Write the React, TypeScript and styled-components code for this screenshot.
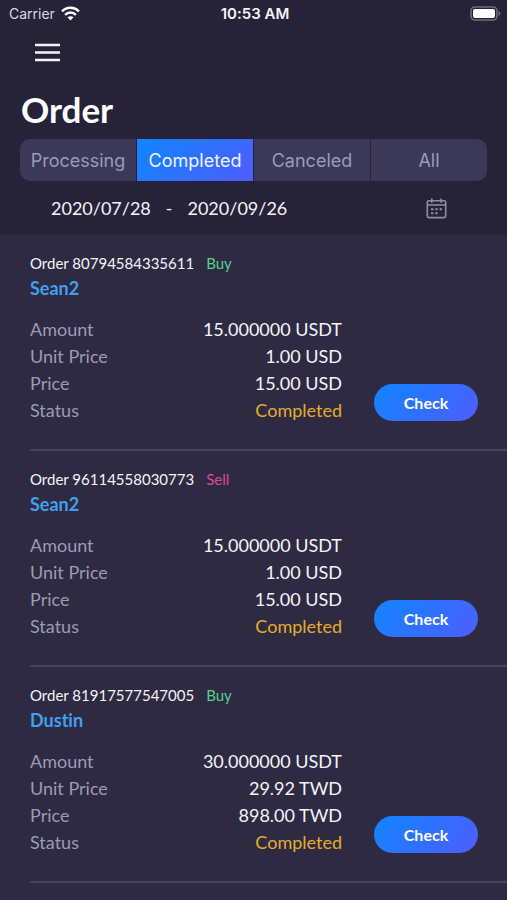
import React, { useState } from "react";
import styled, { createGlobalStyle } from "styled-components";

const GlobalStyle = createGlobalStyle`
  *, *::before, *::after { box-sizing: border-box; }
  body {
    margin: 0;
    background: #2e2a42;
    color: #f4f3fa;
    font-family: Lato, "Liberation Sans", sans-serif;
    font-variant-ligatures: none;
  }
  button { font: inherit; color: inherit; border: 0; padding: 0; background: none; cursor: pointer; }
  h1, h2, p, dl, dd, dt, ul { margin: 0; padding: 0; }
`;

const accent = "linear-gradient(135deg, #0f86ff 0%, #2f71ff 50%, #4f5cff 100%)";

const Header = styled.header`
  background: #262238;
  padding-bottom: 11px;
`;

const StatusBar = styled.div`
  display: grid;
  grid-template-columns: 1fr auto 1fr;
  align-items: center;
  height: 27px;
  padding: 0 6px 0 9px;
  font-family: Inter, "Liberation Sans", sans-serif;
  font-size: 14px;
`;

const Carrier = styled.div`
  display: flex;
  align-items: center;
  gap: 6px;
  color: #d9d8e2;
`;

const Clock = styled.time`
  font-size: 15px;
  font-weight: 600;
`;

const Battery = styled.svg`
  justify-self: end;
`;

const MenuButton = styled.button`
  display: block;
  margin: 15px 0 0 34px;
  height: 22px;

  svg { display: block; }
`;

const Title = styled.h1`
  margin: 23px 0 0 21px;
  font-size: 35px;
  line-height: 44px;
  font-weight: 700;
  color: #ffffff;
`;

const Tabs = styled.div`
  display: grid;
  grid-template-columns: repeat(4, 1fr);
  gap: 1px;
  margin: 8px 20px 0;
  height: 42px;
  border-radius: 10px;
  overflow: hidden;
`;

const Tab = styled.button<{ $active: boolean }>`
  font-family: Inter, "Liberation Sans", sans-serif;
  font-size: 18px;
  background: ${(p) => (p.$active ? accent : "#3c3857")};
  color: ${(p) => (p.$active ? "#f0f4ff" : "#9a9bbd")};
`;

const DateRange = styled.div`
  display: flex;
  align-items: center;
  height: 32px;
  margin: 11px 60px 0 51px;
  gap: 15px;
  font-size: 18px;
`;

const CalendarButton = styled.button`
  margin-left: auto;

  svg { display: block; }
`;

const OrderList = styled.ul`
  list-style: none;
  padding-left: 30px;
`;

const OrderItem = styled.li`
  padding: 18px 29px 25px 0;
  border-bottom: 2px solid #47435f;
`;

const OrderMeta = styled.p`
  display: flex;
  gap: 12px;
  font-size: 15px;
  line-height: 20px;
`;

const Side = styled.span<{ $side: "Buy" | "Sell" }>`
  color: ${(p) => (p.$side === "Buy" ? "#53d290" : "#d94b94")};
`;

const Trader = styled.h2`
  margin-top: 2px;
  font-size: 18px;
  line-height: 26px;
  font-weight: 700;
  color: #429ff0;
`;

const OrderBody = styled.div`
  display: flex;
  align-items: flex-end;
  gap: 32px;
  margin-top: 15px;
`;

const Details = styled.dl`
  flex: 1;
  font-size: 18px;
  line-height: 27px;
`;

const Detail = styled.div`
  display: flex;
  justify-content: space-between;
`;

const Label = styled.dt`
  color: #9a9bb8;
`;

const Value = styled.dd<{ $status?: boolean }>`
  color: ${(p) => (p.$status ? "#e5ac2c" : "#f4f3fa")};
`;

const CheckButton = styled.button`
  width: 104px;
  height: 37px;
  margin-bottom: 3px;
  border-radius: 19px;
  background: ${accent};
  color: #ffffff;
  font-size: 16px;
  font-weight: 700;
`;

interface Order {
  id: string;
  side: "Buy" | "Sell";
  trader: string;
  amount: string;
  unitPrice: string;
  price: string;
}

const orders: Order[] = [
  { id: "80794584335611", side: "Buy", trader: "Sean2", amount: "15.000000 USDT", unitPrice: "1.00 USD", price: "15.00 USD" },
  { id: "96114558030773", side: "Sell", trader: "Sean2", amount: "15.000000 USDT", unitPrice: "1.00 USD", price: "15.00 USD" },
  { id: "81917577547005", side: "Buy", trader: "Dustin", amount: "30.000000 USDT", unitPrice: "29.92 TWD", price: "898.00 TWD" },
];

const tabs = ["Processing", "Completed", "Canceled", "All"];

const WifiIcon = () => (
  <svg width="19" height="15" viewBox="0 0 19 15" fill="none" stroke="#fff" strokeWidth="2.5" aria-hidden="true">
    <path d="M1 5.3C5.8.6 13.2.6 18 5.3" />
    <path d="M4.1 8.8c3.1-3 7.7-3 10.8 0" />
    <path d="M9.5 14.4 6.5 11.3c1.6-1.5 4.4-1.5 6 0Z" fill="#fff" stroke="none" />
  </svg>
);

const CalendarIcon = () => (
  <svg width="21" height="21" viewBox="0 0 21 21" fill="none" stroke="#918e9b" strokeWidth="1.6" aria-hidden="true">
    <rect x="1.3" y="2.8" width="18.4" height="16.8" rx="1.5" />
    <path d="M1.3 7h18.4M5.8.5v4.2M15.2.5v4.2" />
    <path d="M5 11.3h2.4M9.3 11.3h2.4M13.6 11.3H16M5 15.2h2.4M9.3 15.2h2.4" strokeWidth="1.9" />
  </svg>
);

export default function App() {
  const [active, setActive] = useState("Completed");
  return (
    <>
      <GlobalStyle />
      <Header>
        <StatusBar>
          <Carrier>
            Carrier
            <WifiIcon />
          </Carrier>
          <Clock>10:53 AM</Clock>
          <Battery width="31" height="15" viewBox="0 0 31 15" role="img" aria-label="Battery full">
            <rect x="1" y="1" width="26" height="13" rx="4" fill="none" stroke="#6f6b80" strokeWidth="1.6" />
            <rect x="3" y="3" width="22" height="9" rx="2" fill="#fff" />
            <path d="M28.5 5c2.6 1 2.6 4 0 5Z" fill="#6f6b80" />
          </Battery>
        </StatusBar>
        <MenuButton aria-label="Open menu">
          <svg width="27" height="22" viewBox="0 0 27 22" stroke="#f4f3fa" strokeWidth="2.4">
            <path d="M1 3h25M1 10.5h25M1 18h25" />
          </svg>
        </MenuButton>
        <Title>Order</Title>
        <Tabs role="tablist" aria-label="Order status">
          {tabs.map((tab) => (
            <Tab key={tab} role="tab" aria-selected={tab === active} $active={tab === active} onClick={() => setActive(tab)}>
              {tab}
            </Tab>
          ))}
        </Tabs>
        <DateRange>
          <time>2020/07/28</time>
          <span>-</span>
          <time>2020/09/26</time>
          <CalendarButton aria-label="Choose dates">
            <CalendarIcon />
          </CalendarButton>
        </DateRange>
      </Header>
      <OrderList>
        {orders.map((order) => (
          <OrderItem key={order.id}>
            <OrderMeta>
              <span>Order {order.id}</span>
              <Side $side={order.side}>{order.side}</Side>
            </OrderMeta>
            <Trader>{order.trader}</Trader>
            <OrderBody>
              <Details>
                <Detail>
                  <Label>Amount</Label>
                  <Value>{order.amount}</Value>
                </Detail>
                <Detail>
                  <Label>Unit Price</Label>
                  <Value>{order.unitPrice}</Value>
                </Detail>
                <Detail>
                  <Label>Price</Label>
                  <Value>{order.price}</Value>
                </Detail>
                <Detail>
                  <Label>Status</Label>
                  <Value $status>Completed</Value>
                </Detail>
              </Details>
              <CheckButton>Check</CheckButton>
            </OrderBody>
          </OrderItem>
        ))}
      </OrderList>
    </>
  );
}
